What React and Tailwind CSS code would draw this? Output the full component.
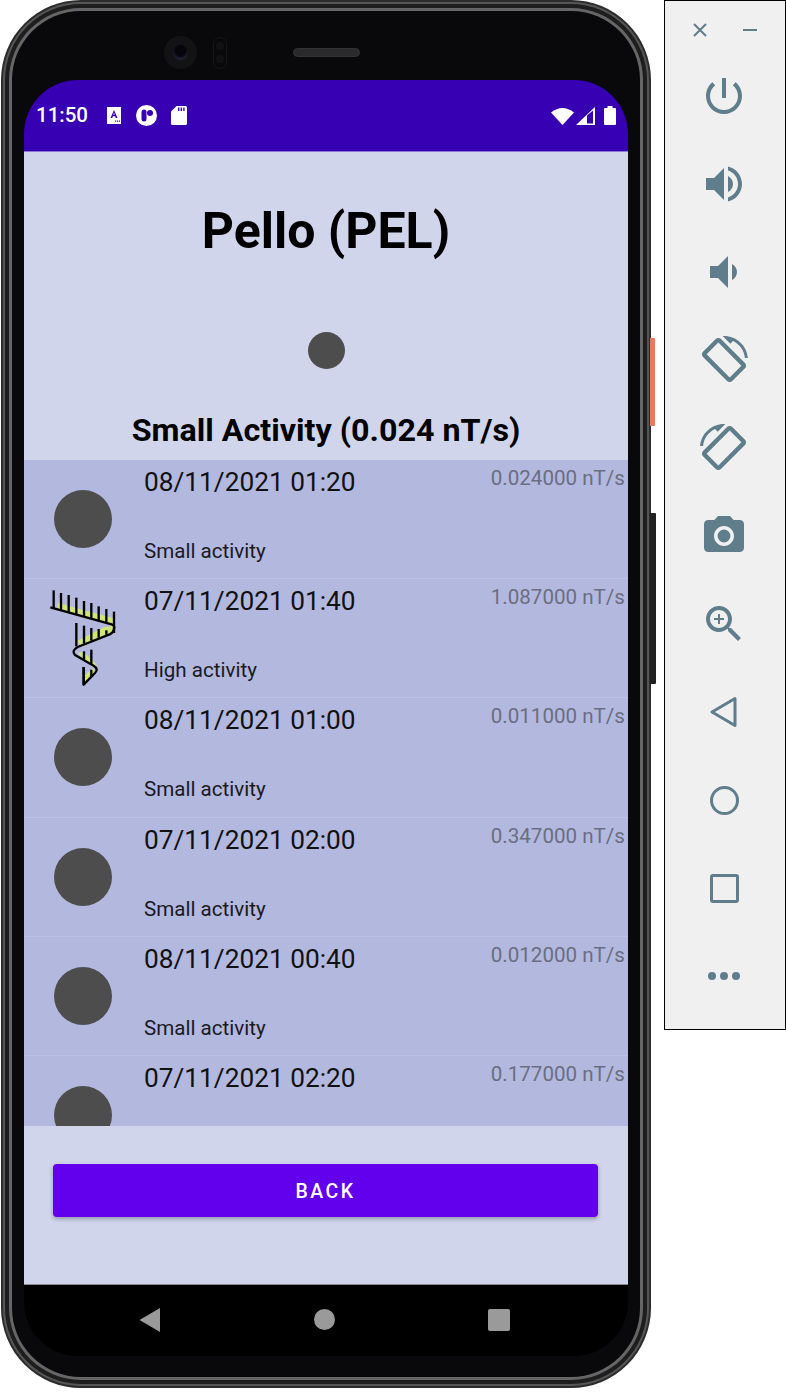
const rows = [
  { date: '08/11/2021 01:20', value: '0.024000 nT/s', label: 'Small activity' },
  { date: '07/11/2021 01:40', value: '1.087000 nT/s', label: 'High activity', high: true },
  { date: '08/11/2021 01:00', value: '0.011000 nT/s', label: 'Small activity' },
  { date: '07/11/2021 02:00', value: '0.347000 nT/s', label: 'Small activity' },
  { date: '08/11/2021 00:40', value: '0.012000 nT/s', label: 'Small activity' },
  // label of the last row sits below the fold of the list
  { date: '07/11/2021 02:20', value: '0.177000 nT/s' },
];

const ticks = [
  [88, 62, 116], [110, 70, 122], [133, 76, 128], [156, 84, 134], [179, 94, 141], [201, 100, 147], [223, 110, 153], [246, 118, 160], [269, 126, 190],
  [156, 160, 230], [179, 168, 222], [201, 175, 213], [223, 178, 204], [246, 182, 195],
  [179, 245, 270], [201, 240, 284], [178, 292, 345], [201, 300, 322],
];

function HighActivityIcon() {
  return (
    <svg width="70" height="100" viewBox="71 55 210 300" fill="none">
      <path d="M100 100L268 146V168L100 122Z M240 172L268 168L268 190L172 232L158 214Z M160 250L178 246L218 286L206 294Z M178 320L205 296L214 306L178 345Z" fill="#CFE57A" />
      <path d="M78 113L262 164Q274 168 268 182Q266 190 256 194L160 232Q140 244 152 256L208 288Q224 298 212 310L178 345V292" stroke="#000" strokeWidth="7" strokeLinejoin="round" />
      {ticks.map(([x, y1, y2]) => (
        <line key={`${x}-${y1}`} x1={x} y1={y1} x2={x} y2={y2} stroke="#000" strokeWidth="7" />
      ))}
    </svg>
  );
}

function ActivityRow({ row }) {
  return (
    <div className="flex h-[119.2px] shrink-0 border-b border-[#BAC0E6]">
      <div className="flex w-[120px] shrink-0 items-center justify-center pr-[2px]">
        {row.high ? <HighActivityIcon /> : <div className="h-[58px] w-[58px] rounded-full bg-[#4D4D4D]" />}
      </div>
      <div className="flex-1 pt-[5px]">
        <div className="flex h-[34px] items-start justify-between pr-[3px]">
          <span className="text-[26.25px] leading-[34px] text-[#111]">{row.date}</span>
          <span className="text-[20.6px] leading-[26px] text-[#6B6E80]">{row.value}</span>
        </div>
        {row.label && <div className="mt-[37px] text-[20.6px] leading-[30px] text-[#1A1A24]">{row.label}</div>}
      </div>
    </div>
  );
}

function StatusBar() {
  return (
    <div className="flex h-[72px] shrink-0 items-center justify-between border-b border-[#8E78D8] bg-[#3700B3] pr-[12px] pl-[12px] text-white">
      <div className="flex items-center">
        <span className="w-[71px] text-[20.5px] leading-none font-medium">11:50</span>
        <svg width="14" height="17" viewBox="0 0 14 17" className="mr-[15px]">
          <path fillRule="evenodd" d="M0 0H14V17H0Z M7 3L3.5 11H5.2L5.9 9.2H8.1L8.8 11H10.5L7 3Z M7 5.4L7.7 7.8H6.3Z M8 13.5H9.2V14.7H8Z M10 13.5H11.2V14.7H10Z M12 13.5H13V14.7H12Z" fill="#fff" />
        </svg>
        <svg width="21" height="21" viewBox="0 0 21 21" className="mr-[14px]">
          <circle cx="10.5" cy="10.5" r="10.5" fill="#fff" />
          <rect x="5.5" y="4.5" width="5" height="12" rx="2.5" fill="#3700B3" />
          <circle cx="14" cy="8" r="3" fill="#3700B3" />
        </svg>
        <svg width="16" height="19" viewBox="0 0 16 19">
          <path fillRule="evenodd" d="M5.5 0H14.5Q16 0 16 1.5V17.5Q16 19 14.5 19H1.5Q0 19 0 17.5V5.5Z M7 1.5V5H8.4V1.5Z M9.6 1.5V5H11V1.5Z M12.2 1.5V5H13.6V1.5Z" fill="#fff" />
        </svg>
      </div>
      <div className="flex items-center">
        <svg width="23" height="18" viewBox="0 0 23 18" className="mr-[2px]">
          <path d="M0 5.5Q11.5 -3.5 23 5.5L11.5 18Z" fill="#fff" />
        </svg>
        <svg width="19" height="18" viewBox="0 0 19 18" className="mr-[9px]">
          <path fillRule="evenodd" d="M0 18L19 0V18Z M11 8.5V16.5H17V3.5Z" fill="#fff" />
          <path d="M12 15.5V8.5L16 5V15.5Z" fill="#3700B3" />
        </svg>
        <svg width="12" height="19" viewBox="0 0 12 19">
          <path d="M3.5 0H8.5V2H11Q12 2 12 3V18Q12 19 11 19H1Q0 19 0 18V3Q0 2 1 2H3.5Z" fill="#fff" />
        </svg>
      </div>
    </div>
  );
}

function Screen() {
  return (
    <div className="flex h-[1276px] w-[604px] flex-col overflow-hidden rounded-[54px] bg-black">
      <StatusBar />
      <div className="flex h-[308px] shrink-0 flex-col items-center bg-[#D0D5EC]">
        <h1 className="mt-[49px] h-[60px] text-[50px] leading-[60px] font-bold text-black">Pello (PEL)</h1>
        <div className="mt-[71px] h-[37px] w-[37px] rounded-full bg-[#4D4D4D]" />
        <p className="mt-[40px] text-[32.25px] leading-[42px] font-bold text-black">Small Activity (0.024 nT/s)</p>
      </div>
      <div className="flex h-[666px] shrink-0 flex-col overflow-hidden bg-[#B3B8DF]">
        {rows.map((row) => (
          <ActivityRow key={row.date} row={row} />
        ))}
      </div>
      <div className="flex h-[158px] shrink-0 flex-col items-center bg-[#D0D5EC] pt-[38px]">
        <button className="mr-[1px] h-[53px] w-[545px] rounded-[4px] bg-[#6200EE] pt-[2px] text-[19.5px] font-medium tracking-[2.5px] text-white shadow-[0_2px_4px_rgba(0,0,0,0.3)]">
          BACK
        </button>
      </div>
      <div className="flex flex-1 items-center justify-center gap-[153px] border-t border-[#8A8A8A] pr-[3px] pb-[2px]">
        <svg width="22" height="24" viewBox="0 0 22 24">
          <path d="M0.5 12L21 0V24Z" fill="#9A9A9A" />
        </svg>
        <div className="h-[21px] w-[21px] rounded-full bg-[#9A9A9A]" />
        <div className="h-[22px] w-[22px] rounded-[2px] bg-[#9A9A9A]" />
      </div>
    </div>
  );
}

function Phone() {
  return (
    <div className="relative ml-[1px] h-[1388px] w-[650px] shrink-0 rounded-[80px] bg-[#2C2C2C] p-[2px]">
      <div className="absolute top-[338px] -right-[4px] h-[88px] w-[5px] rounded-r-[1px] bg-[#E8795E]" />
      <div className="absolute top-[513px] -right-[5px] h-[171px] w-[6px] rounded-r-[1px] bg-[#222]" />
      <div className="h-full rounded-[78px] bg-[#565656] p-[2px]">
        <div className="h-full rounded-[76px] bg-[#1E1E1E] p-[4px]">
          <div className="h-full rounded-[72px] bg-[#666] p-[3px]">
            <div className="flex h-full flex-col items-center rounded-[69px] bg-[#09090B]">
              <div className="flex h-[69px] w-full shrink-0 items-center pt-[14px]">
                <div className="ml-[152px] flex h-[33px] w-[33px] items-center justify-center rounded-full bg-[#131316]">
                  <div className="h-[15px] w-[15px] rounded-full bg-[#05050A] shadow-[inset_0_-2px_3px_#2a2a44]" />
                </div>
                <div className="ml-[16px] flex h-[32px] w-[14px] flex-col items-center justify-around rounded-[7px] border border-[#17171A] py-[2px]">
                  <div className="h-[8px] w-[8px] rounded-full bg-[#111114]" />
                  <div className="h-[8px] w-[8px] rounded-full bg-[#111114]" />
                </div>
                <div className="ml-[66px] h-[9px] w-[67px] rounded-full border border-[#333] bg-[#2A2A2C]" />
              </div>
              <Screen />
            </div>
          </div>
        </div>
      </div>
    </div>
  );
}

const iconPaths = {
  power: 'M13 3h-2v10h2V3zm4.83 2.17l-1.42 1.42C17.99 7.86 19 9.81 19 12c0 3.87-3.13 7-7 7s-7-3.13-7-7c0-2.19 1.01-4.14 2.58-5.42L6.17 5.17C4.23 6.82 3 9.26 3 12c0 4.97 4.03 9 9 9s9-4.03 9-9c0-2.74-1.23-5.18-3.17-6.83z',
  volumeUp: 'M3 9v6h4l5 5V4L7 9H3zm13.5 3c0-1.77-1.02-3.29-2.5-4.03v8.05c1.48-.73 2.5-2.25 2.5-4.02zM14 3.23v2.06c2.89.86 5 3.54 5 6.71s-2.11 5.85-5 6.71v2.06c4.01-.91 7-4.49 7-8.77s-2.99-7.86-7-8.77z',
  volumeDown: 'M18.5 12c0-1.77-1.02-3.29-2.5-4.03v8.05c1.48-.73 2.5-2.25 2.5-4.02zM5 9v6h4l5 5V4L9 9H5z',
  rotateArc: 'M16.48 2.52c3.27 1.55 5.61 4.72 5.97 8.48h1.5C23.44 4.84 18.29 0 12 0l-.66.03 3.81 3.81 1.33-1.32z',
  rotateBody: 'M10.23 1.75c-.59-.59-1.54-.59-2.12 0L1.75 8.11c-.59.59-.59 1.54 0 2.12l12.02 12.02c.59.59 1.54.59 2.12 0l6.36-6.36c.59-.59.59-1.54 0-2.12L10.23 1.75zm4.6 19.44L2.81 9.17l6.36-6.36 12.02 12.02-6.36 6.36z',
  camera: 'M12 15.2a3.2 3.2 0 100-6.4 3.2 3.2 0 000 6.4z M9 2L7.17 4H4c-1.1 0-2 .9-2 2v12c0 1.1.9 2 2 2h16c1.1 0 2-.9 2-2V6c0-1.1-.9-2-2-2h-3.17L15 2H9zm3 15c-2.76 0-5-2.24-5-5s2.24-5 5-5 5 2.24 5 5-2.24 5-5 5z',
  zoom: 'M15.5 14h-.79l-.28-.27C15.41 12.59 16 11.11 16 9.5 16 5.91 13.09 3 9.5 3S3 5.91 3 9.5 5.91 16 9.5 16c1.61 0 3.09-.59 4.23-1.57l.27.28v.79l5 4.99L20.49 19l-4.99-5zm-6 0C7.01 14 5 11.99 5 9.5S7.01 5 9.5 5 14 7.01 14 9.5 11.99 14 9.5 14z M12 10h-2v2H9v-2H7V9h2V7h1v2h2v1z',
};

function ToolIcon({ path }) {
  return (
    <div className="flex h-[88px] shrink-0 items-center justify-center pr-[2px]">
      <svg width="48" height="48" viewBox="0 0 24 24" fill="#607D8B">
        <path d={path} />
      </svg>
    </div>
  );
}

function RotateIcon({ className }) {
  return (
    <div className="flex h-[88px] shrink-0 items-center justify-center pr-[2px]">
      <svg width="48" height="48" viewBox="0 0 24 24" fill="#607D8B" className={className}>
        <path d={iconPaths.rotateArc} />
        <path d={iconPaths.rotateBody} stroke="#607D8B" strokeWidth="0.7" />
      </svg>
    </div>
  );
}

function ToolPanel() {
  return (
    <div className="ml-[13px] flex h-[1030px] w-[122px] shrink-0 flex-col border border-black bg-[#F0F0F0]">
      <div className="flex h-[51px] shrink-0 items-center pt-[7px] pl-[28px]">
        <svg width="14" height="14" viewBox="0 0 14 14" stroke="#607D8B" strokeWidth="2">
          <path d="M1 1L13 13M13 1L1 13" />
        </svg>
        <div className="ml-[36px] h-[2px] w-[14px] bg-[#607D8B]" />
      </div>
      <ToolIcon path={iconPaths.power} />
      <ToolIcon path={iconPaths.volumeUp} />
      <ToolIcon path={iconPaths.volumeDown} />
      <RotateIcon />
      <RotateIcon className="-scale-x-100" />
      <ToolIcon path={iconPaths.camera} />
      <ToolIcon path={iconPaths.zoom} />
      <div className="flex h-[88px] shrink-0 items-center justify-center pr-[2px]">
        <svg width="28" height="32" viewBox="0 0 28 32" fill="none" stroke="#607D8B" strokeWidth="3" strokeLinejoin="round">
          <path d="M2 16L25 2.5V29.5Z" />
        </svg>
      </div>
      <div className="flex h-[88px] shrink-0 items-center justify-center pr-[2px]">
        <div className="h-[29px] w-[29px] rounded-full border-[3px] border-[#607D8B]" />
      </div>
      <div className="flex h-[88px] shrink-0 items-center justify-center pr-[2px]">
        <div className="h-[29px] w-[29px] rounded-[3px] border-[3px] border-[#607D8B]" />
      </div>
      <div className="flex h-[88px] shrink-0 items-center justify-center gap-[4px] pr-[2px]">
        <div className="h-[8px] w-[8px] rounded-full bg-[#607D8B]" />
        <div className="h-[8px] w-[8px] rounded-full bg-[#607D8B]" />
        <div className="h-[8px] w-[8px] rounded-full bg-[#607D8B]" />
      </div>
    </div>
  );
}

export default function App() {
  return (
    <div className="flex h-[1392px] w-[786px] items-start overflow-hidden bg-white font-['Roboto',sans-serif]">
      <Phone />
      <ToolPanel />
    </div>
  );
}
